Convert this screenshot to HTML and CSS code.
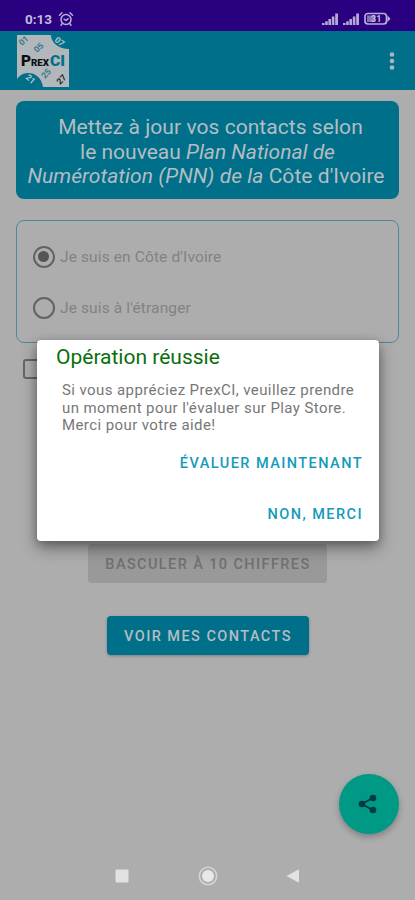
FILE: index.html
```html
<!DOCTYPE html>
<html lang="fr">
<head>
<meta charset="utf-8">
<title>PrexCI</title>
<link rel="stylesheet" href="styles.css">
</head>
<body>
<div class="screen">
  <header class="status">
    <span class="clock">0:13</span>
    <svg class="alarm" width="16" height="16" viewBox="0 0 16 16" fill="none" stroke="#b9b0d6" stroke-width="1.5" stroke-linecap="round"><circle cx="8" cy="8.5" r="5"/><path d="M1.5 4.2 4 1.8M14.500 4.200 12 1.800M4.300 12.500 3 14.200M11.700 12.500 13 14.200M6 8.200 8 9.300 10 7.800"/></svg>
    <svg class="signals" width="72" height="14" viewBox="0 0 72 14">
      <g fill="#b3a9d4"><path id="sig" d="M1 13v-2h2.600v2zM4.200 13V9.300h2.600V13zM7.400 13V7h2.600V13zM10.800 13V4.500h2.600v8.500zM14.200 13V1.500h2.800V13z"/><use href="#sig" x="21"/></g>
      <rect x="44" y="1.500" width="21.500" height="10.500" rx="3" fill="none" stroke="#b9b0d6" stroke-width="1.700"/>
      <path d="M66.500 3.500 69.500 6.800 66.500 10z" fill="#b9b0d6"/>
      <rect x="46" y="3.500" width="8" height="6.500" fill="#8175b8"/>
      <text x="50" y="10.200" class="battery-text">31</text>
    </svg>
  </header>

  <nav class="appbar">
    <svg class="logo" width="52" height="52" viewBox="0 0 52 52">
      <rect width="52" height="52" fill="#b1b7ba"/>
      <path d="M34 0A18 14 0 0 0 52 14V0zM0 52V44C6 34 24 36 26 52z" fill="#007089"/>
      <g class="digits">
        <text transform="translate(5 11) rotate(-42)" fill="#36788b">01</text>
        <text transform="translate(20 18) rotate(-42)" fill="#36788b">05</text>
        <text transform="translate(37 6) rotate(38)" fill="#b9c5ca">07</text>
        <text transform="translate(8 43) rotate(42)" fill="#b9c5ca">21</text>
        <text transform="translate(28 44) rotate(-48)" fill="#36788b">25</text>
        <text transform="translate(43 50) rotate(-45)" fill="#202428">27</text>
      </g>
      <text class="brand" x="4" y="31" textLength="10" lengthAdjust="spacingAndGlyphs" font-size="14">P</text>
      <text class="brand" x="14" y="31" textLength="18" lengthAdjust="spacingAndGlyphs" font-size="9">REX</text>
      <text class="brand ci" x="33" y="31" textLength="15" lengthAdjust="spacingAndGlyphs" font-size="15">CI</text>
    </svg>
    <svg width="6" height="20" viewBox="0 0 6 20" fill="#abb5b9"><circle cx="3" cy="3.500" r="2.300"/><circle cx="3" cy="10" r="2.300"/><circle cx="3" cy="16.500" r="2.300"/></svg>
  </nav>

  <main class="content">
    <h1 class="banner">
      <span class="l1">Mettez à jour vos contacts selon</span>
      <span class="l2">le nouveau <i>Plan National de</i></span>
      <span class="l3"><i>Numérotation (PNN) de la</i> Côte d'Ivoire</span>
    </h1>
    <section class="choices">
      <div class="choice"><span class="radio on"></span><span>Je suis en Côte d'Ivoire</span></div>
      <div class="choice"><span class="radio"></span><span>Je suis à l'étranger</span></div>
    </section>
    <span class="check"></span>
    <div class="button disabled"><span>BASCULER À 10 CHIFFRES</span></div>
    <div class="button primary"><span>VOIR MES CONTACTS</span></div>
  </main>

  <footer class="navbar">
    <svg width="182" height="22" viewBox="0 0 182 22"><rect x="0.500" y="4.500" width="13" height="13" rx="1" fill="#e2e2e2"/><circle cx="87" cy="11" r="8.700" fill="none" stroke="#d5d5d5" stroke-width="1.600"/><circle cx="87" cy="11" r="6" fill="#e8e8e8"/><path d="M165.500 11 178 4.300v13.400z" fill="#e2e2e2"/></svg>
  </footer>

  <div class="fab"><svg width="20" height="20" viewBox="0 0 20 20" fill="#003b43"><path d="M14.500 4 4 10l10.500 6" fill="none" stroke="#003b43" stroke-width="2"/><circle cx="4" cy="10" r="3.300"/><circle cx="15" cy="4" r="3.300"/><circle cx="15" cy="16" r="3.300"/></svg></div>

  <div class="dialog" role="dialog">
    <h2>Opération réussie</h2>
    <p><span>Si vous appréciez PrexCI, veuillez prendre</span><span>un moment pour l'évaluer sur Play Store.</span><span>Merci pour votre aide!</span></p>
    <div class="action rate">ÉVALUER MAINTENANT</div>
    <div class="action no">NON, MERCI</div>
  </div>
</div>
</body>
</html>
```
FILE: styles.css
```css
* { box-sizing: border-box; }
body { margin: 0; font-family: Roboto, "Liberation Sans", sans-serif; }
.screen { position: relative; width: 415px; height: 900px; overflow: hidden; background: #adadad; display: flex; flex-direction: column; }
.status { height: 31px; background: #290080; display: flex; align-items: center; padding: 7px 22px 0 25px; }
.clock { color: #c4bddb; font-size: 13.5px; font-weight: 700; width: 33px; line-height: 16px; }
.signals { margin-left: auto; }
.battery-text { font-size: 9px; font-weight: 700; fill: #c4bddb; }
.appbar { height: 59px; background: #00708a; display: flex; align-items: center; justify-content: space-between; padding: 0 20px 0 17px; }
.logo { margin-top: 1px; }
.digits { font-size: 8.5px; font-weight: 700; }
.brand { font-weight: 900; fill: #0b0f12; }
.brand.ci { fill: #007089; }
.content { flex: 1; padding: 11px 16px 0; display: flex; flex-direction: column; align-items: center; }
.banner { margin: 0; width: 383px; height: 98px; padding: 14px 0 0; border-radius: 8px; background: #00708a; color: #b4bdc2; font-weight: 400; font-size: 21px; line-height: 24.5px; text-align: center; }
.banner span { display: block; white-space: nowrap; }
.l1 { padding-left: 6px; letter-spacing: 0.05px; }
.l3 { letter-spacing: 0.05px; margin-left: -3px; }
.choices { width: 383px; height: 123px; margin-top: 21px; border: 1.5px solid #4f879e; border-radius: 8px; padding: 10px 15.5px; }
.choice { height: 51px; display: flex; align-items: center; gap: 5.5px; color: #828282; font-size: 15.5px; letter-spacing: 0.12px; }
.radio { width: 22px; height: 22px; border: 2px solid #636363; border-radius: 50%; display: grid; place-items: center; }
.on::after { content: ""; width: 11px; height: 11px; border-radius: 50%; background: #555; }
.check { align-self: flex-start; width: 20px; height: 20px; margin: 16px 0 0 7px; border: 2px solid #666; border-radius: 3px; }
.button { height: 39px; padding-top: 1px; border-radius: 4px; display: flex; align-items: center; justify-content: center; font-size: 14.5px; font-weight: 500; white-space: nowrap; }
.disabled { width: 239px; margin-top: 165px; padding-left: 1px; background: #999; color: #707070; letter-spacing: 1.4px; }
.primary { width: 202px; margin-top: 33px; padding-left: 1px; background: #00708a; color: #b4bdc2; letter-spacing: 1.45px; box-shadow: 0 1px 3px #0004; }
.navbar { height: 50px; display: flex; justify-content: center; padding-top: 15px; }
.navbar svg { overflow: visible; margin-left: 9px; }
.navbar rect { transform: translateX(-6px); }
.fab { position: absolute; left: 339px; top: 774px; width: 60px; height: 60px; border-radius: 50%; background: #009985; display: grid; place-items: center; box-shadow: 0 3px 6px #0004; }
.fab svg { margin-right: 2px; }
.dialog { position: absolute; left: 37px; top: 340px; width: 342px; height: 201px; border-radius: 4px; background: #fff; box-shadow: 0 7px 16px #0006, 0 2px 8px #0003; padding: 4px 16px 0 19px; }
.dialog h2 { margin: 0; color: #096f0c; font-size: 21px; font-weight: 400; line-height: 26px; }
.dialog p { margin: 12px 0 0 6px; color: #777; font-size: 15px; line-height: 17.7px; letter-spacing: 0.41px; }
.dialog p span { display: block; white-space: nowrap; }
.action { color: #159abb; font-size: 14.5px; font-weight: 500; line-height: 20px; text-align: right; letter-spacing: 1.45px; }
.rate { margin-top: 19px; }
.no { margin-top: 31px; }
```
